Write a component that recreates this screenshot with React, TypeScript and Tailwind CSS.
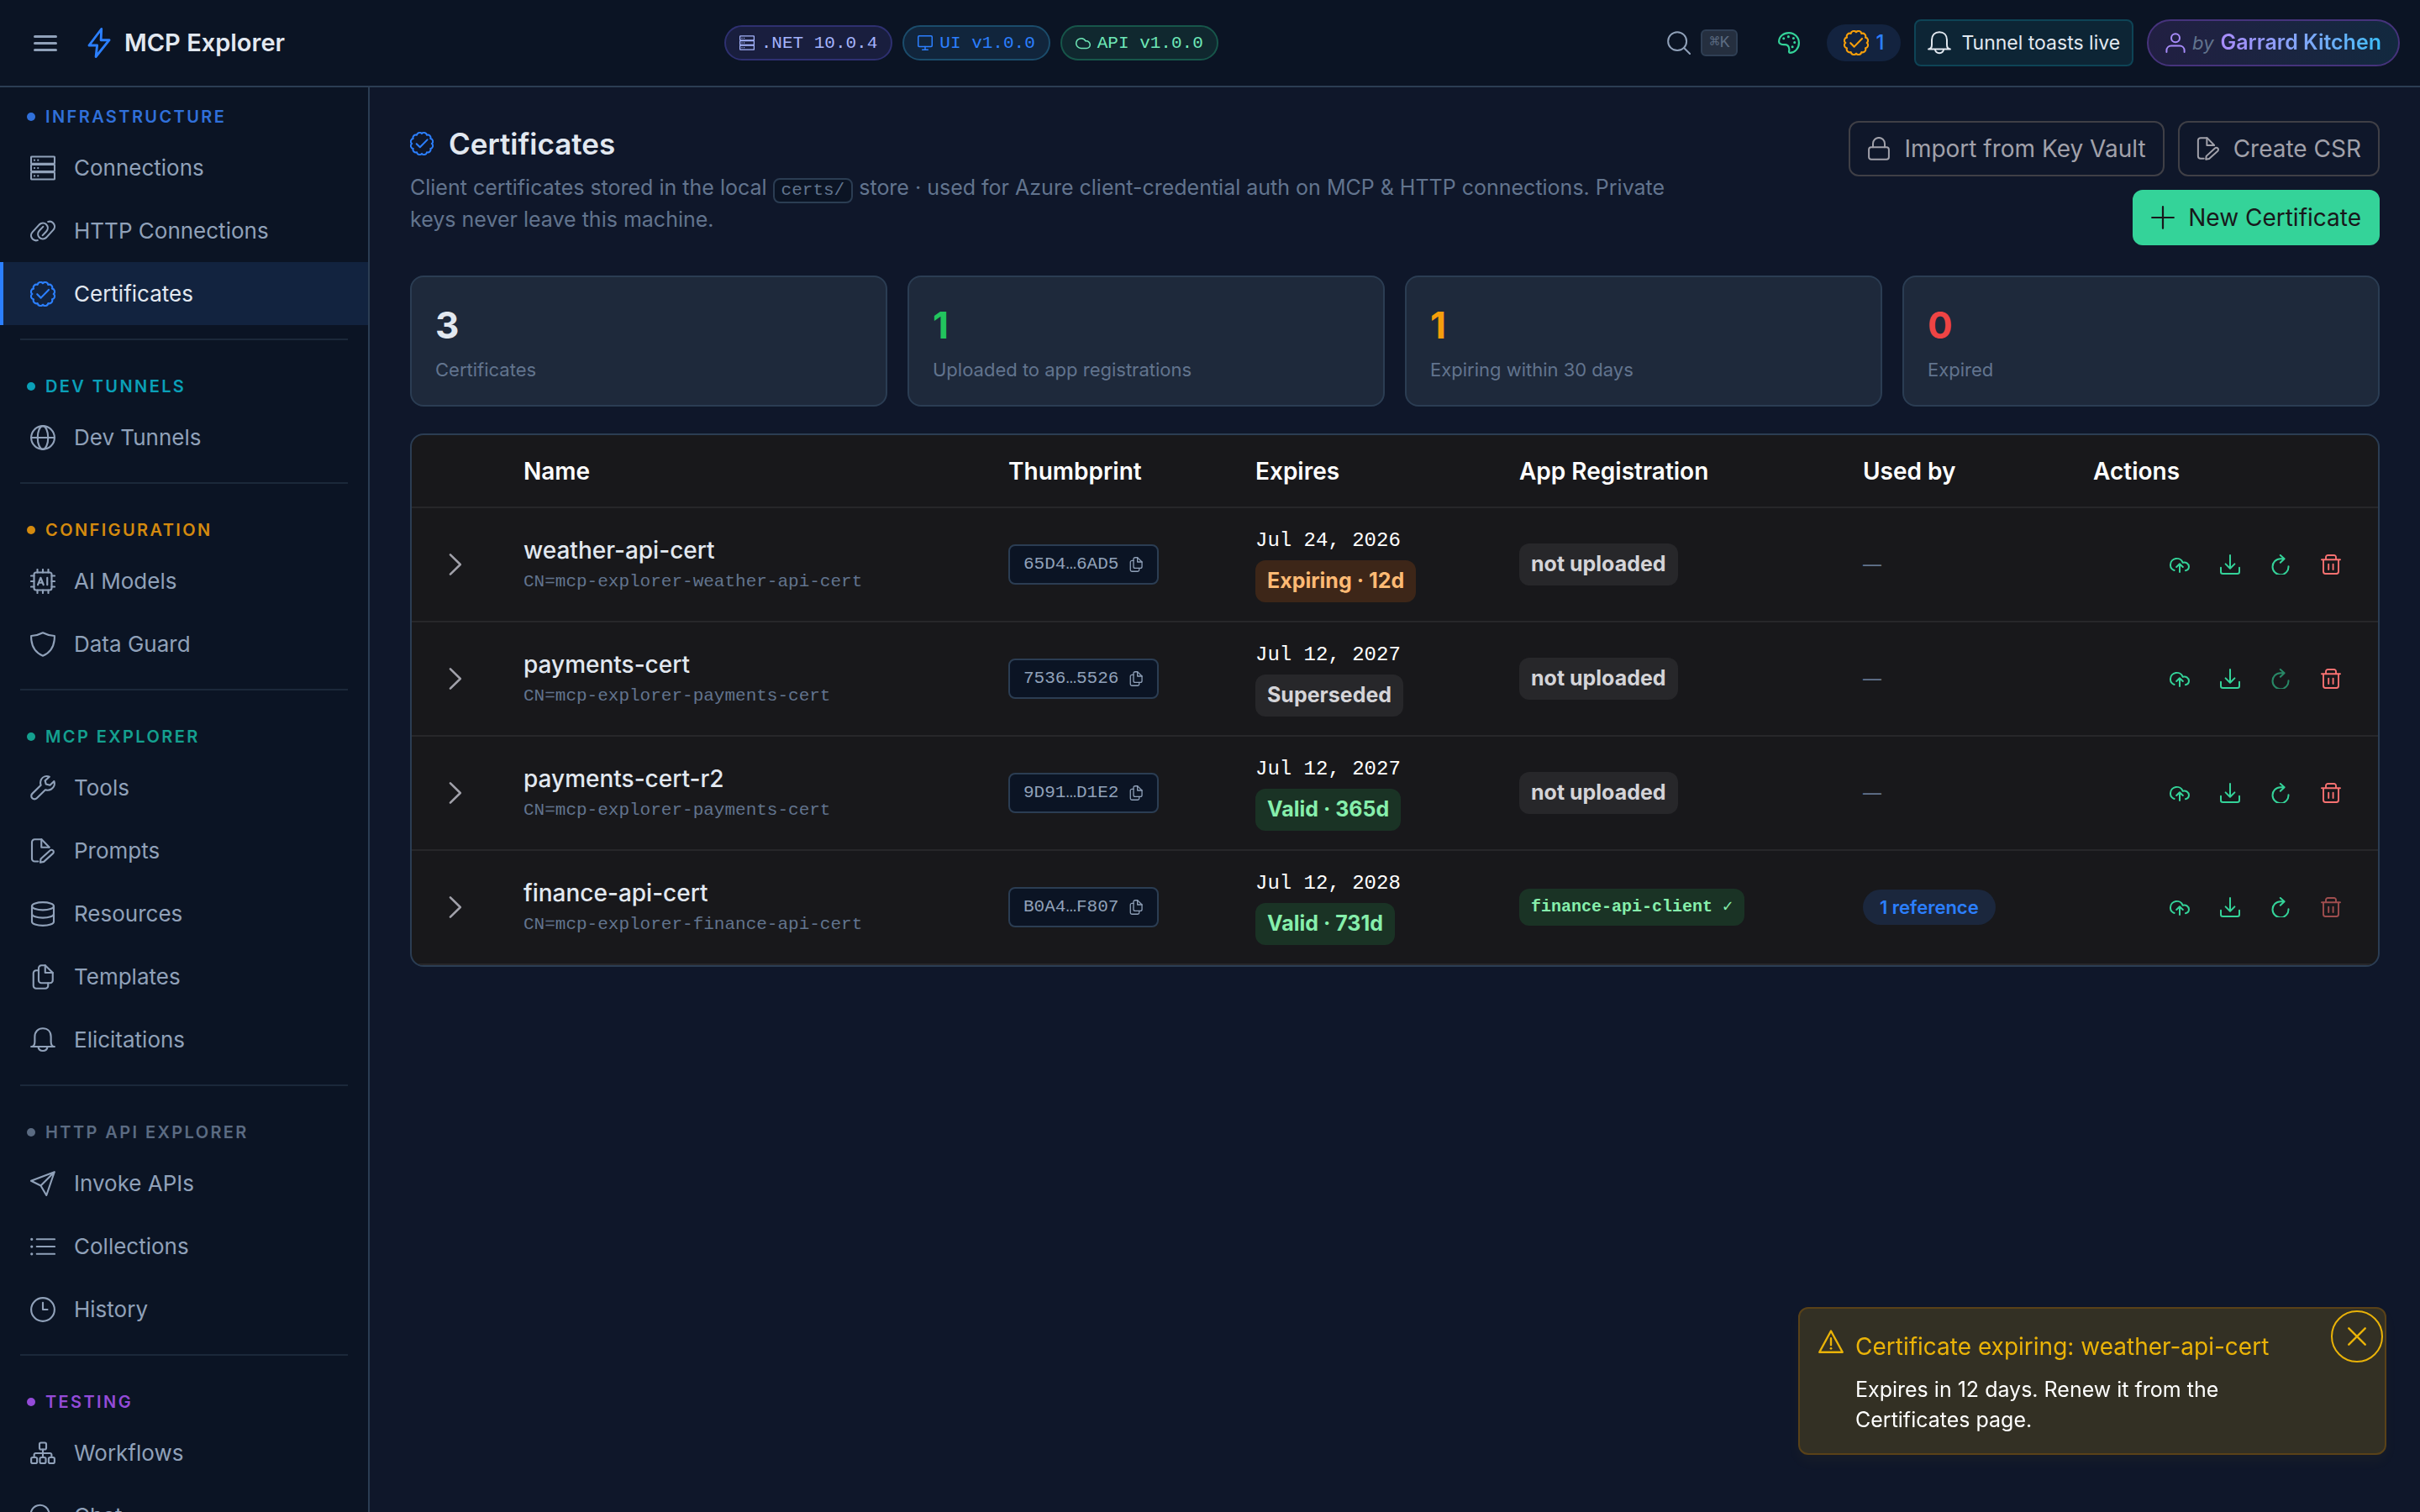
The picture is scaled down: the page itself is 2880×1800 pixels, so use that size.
import type { ReactNode } from "react"

type IconProps = { className?: string }

function Svg({ className = "size-[30px]", children }: IconProps & { children: ReactNode }) {
  return (
    <svg
      viewBox="0 0 24 24"
      fill="none"
      stroke="currentColor"
      strokeWidth="1.7"
      strokeLinecap="round"
      strokeLinejoin="round"
      aria-hidden="true"
      className={`shrink-0 ${className}`}
    >
      {children}
    </svg>
  )
}

// ring of twelve small arcs, used for the certificate seal
const SEAL_PATH =
  Array.from({ length: 12 }, (_, i) => {
    const a = (i * Math.PI) / 6
    const x = (12 + 10.2 * Math.sin(a)).toFixed(2)
    const y = (12 - 10.2 * Math.cos(a)).toFixed(2)
    return i === 0 ? `M${x} ${y}` : `A2.9 2.9 0 0 1 ${x} ${y}`
  }).join("") + "A2.9 2.9 0 0 1 12 1.8Z"

const BoltIcon = (p: IconProps) => (
  <Svg {...p}><path d="M13.8 1 4 14h6.4l-1 9L20 9.8h-6.6z" strokeWidth="1.9" /></Svg>
)
const ServerIcon = (p: IconProps) => (
  <Svg {...p}>
    <rect x=".8" y="1.2" width="22.4" height="6.6" rx=".8" />
    <rect x=".8" y="8.7" width="22.4" height="6.6" rx=".8" />
    <rect x=".8" y="16.2" width="22.4" height="6.6" rx=".8" />
    <path d="M4 4.5h.01M7.4 4.5h.01M4 12h.01M7.4 12h.01M4 19.5h.01M7.4 19.5h.01" strokeWidth="1.8" />
  </Svg>
)
const LinkIcon = (p: IconProps) => (
  <Svg {...p}>
    <path d="M7 20.8a4.8 4.8 0 0 1-4.800-1.200c-1.900-2-1.800-4.800 0-6.700l6.400-7c1.900-1.900 4.900-2 6.700-.1 1.800 1.900 1.800 4.700 0 6.600l-3.500 3.700" />
    <path d="M17 3.200a4.800 4.800 0 0 1 4.800 1.200c1.900 2 1.800 4.800 0 6.700l-6.400 7c-1.900 1.900-4.900 2-6.700.1-1.800-1.900-1.800-4.700 0-6.600l3.500-3.700" />
  </Svg>
)
const VerifiedIcon = (p: IconProps) => (
  <Svg {...p}>
    <path d={SEAL_PATH} />
    <path d="m6.6 12.2 3.500 3.500L17.600 8" />
  </Svg>
)
const GlobeIcon = (p: IconProps) => (
  <Svg {...p}>
    <circle cx="12" cy="12" r="11.1" />
    <ellipse cx="12" cy="12" rx="5" ry="11.1" />
    <path d="M.9 12h22.200" />
  </Svg>
)
const ChipIcon = (p: IconProps) => (
  <Svg {...p}>
    <rect x="3.6" y="3.6" width="16.8" height="16.8" rx="2" />
    <path d="M6.8.8v2.800M12 .8v2.800M17.200.8v2.800M6.800 20.400v2.800M12 20.400v2.800M17.200 20.400v2.800M.8 6.800h2.800M.8 12h2.800M.8 17.200h2.800M20.400 6.800h2.800M20.400 12h2.800M20.400 17.200h2.800" />
    <path d="M7.200 15.400 9.900 8.600l2.700 6.800M8.100 13.400h3.600M16.200 8.600v6.800" />
  </Svg>
)
const ShieldIcon = (p: IconProps) => (
  <Svg {...p}><path d="M12 1c3.600 1.900 7.200 2.900 11.100 3C23.300 13 19.600 19.800 12 23 4.400 19.800.7 13 .9 4 4.800 3.900 8.400 2.900 12 1z" /></Svg>
)
const WrenchIcon = (p: IconProps) => (
  <Svg {...p}>
    <path d="M18.200 1.400c-3-1.200-6.200-.2-7.700 2.400-1 1.800-1 3.800-.4 5.600L1.900 17.500a3 3 0 0 0 0 4.300 3 3 0 0 0 4.300 0l8.200-8c1.900.6 4 .4 5.600-.6 2.600-1.600 3.700-4.700 2.700-7.600l-3.900 3.800-3.800-1-.9-3.300z" />
  </Svg>
)
const FileEditIcon = (p: IconProps) => (
  <Svg {...p}>
    <path d="M7.500 22H4.200a2.600 2.600 0 0 1-2.600-2.600V3.600A2.600 2.600 0 0 1 4.200 1h6.600L18 8.400" />
    <path d="M10.600 1v7.600H18" />
    <path d="m10 19.600 8.800-8a2 2 0 0 1 2.900 0 1.900 1.900 0 0 1 0 2.700l-8.800 8L9.600 23z" />
  </Svg>
)
const DatabaseIcon = (p: IconProps) => (
  <Svg {...p}>
    <ellipse cx="12" cy="4.6" rx="10.4" ry="3.7" />
    <path d="M1.600 4.600v14.800c0 2 4.600 3.700 10.400 3.700s10.400-1.700 10.400-3.700V4.600M1.600 12c0 2 4.600 3.700 10.400 3.700S22.400 14 22.400 12" />
  </Svg>
)
const CloneIcon = (p: IconProps) => (
  <Svg {...p}>
    <path d="M14.200 1h-3.600a2.600 2.600 0 0 0-2.600 2.600v11.600a2.600 2.600 0 0 0 2.600 2.600h8.200a2.600 2.600 0 0 0 2.600-2.600V8z" />
    <path d="M14.200 1v7h7.200M8 5.800H5.600A2.600 2.600 0 0 0 3 8.400v12A2.600 2.600 0 0 0 5.600 23h8.800a2.600 2.600 0 0 0 2.600-2.600v-2.600" />
  </Svg>
)
const BellIcon = (p: IconProps) => (
  <Svg {...p}>
    <path d="M.9 18.400c2.200 0 3.400-1.600 3.400-4.600V9C4.300 4 7.400 1 12 1s7.700 3 7.700 8v4.800c0 3 1.200 4.600 3.400 4.600zM7.600 18.800c.4 2.400 2 3.600 4.400 3.600s4-1.200 4.400-3.600" />
  </Svg>
)
const SendIcon = (p: IconProps) => (
  <Svg {...p}><path d="M23 1 .8 9.400l9.200 4.600L15.400 23.200zM23 1 10 14" /></Svg>
)
const ListIcon = (p: IconProps) => (
  <Svg {...p}><path d="M6.200 5h17M6.200 12h17M6.200 19h17" /><path d="M1.400 5h.01M1.400 12h.01M1.400 19h.01" strokeWidth="2.6" /></Svg>
)
const ClockIcon = (p: IconProps) => (
  <Svg {...p}><circle cx="12" cy="12" r="11.1" /><path d="M12 5.400V12h4.400" /></Svg>
)
const SitemapIcon = (p: IconProps) => (
  <Svg {...p}>
    <rect x="8.8" y="2" width="6.4" height="6.4" rx="1.4" />
    <rect x=".9" y="16" width="5.6" height="5.6" rx="1.4" />
    <rect x="9.2" y="16" width="5.6" height="5.6" rx="1.4" />
    <rect x="17.5" y="16" width="5.6" height="5.6" rx="1.4" />
    <path d="M12 8.400V16M3.700 16v-2.600a1.400 1.400 0 0 1 1.400-1.400h13.800a1.400 1.400 0 0 1 1.400 1.400V16" />
  </Svg>
)
const CommentsIcon = (p: IconProps) => (
  <Svg {...p}>
    <path d="M2 15.200A8.800 8.800 0 1 1 6 18.400L1 19.600z" />
    <path d="M19.400 9c3.200 1.600 4.400 5.400 2.800 8.600l.8 4.800-4.600-1A7.400 7.400 0 0 1 10 20.600" />
  </Svg>
)
const DesktopIcon = (p: IconProps) => (
  <Svg {...p}><rect x="1" y="1" width="22" height="17" rx="1.6" strokeWidth="2" /><path d="M12 18v5M7.600 23h8.800" strokeWidth="2" /></Svg>
)
const CloudIcon = (p: IconProps) => (
  <Svg {...p}><path d="M8.600 20.600A7.700 7.700 0 0 1 1 12.400a8 8 0 0 1 15-3.200A5.800 5.800 0 0 1 23 15c0 3.200-2.400 5.600-5.600 5.600z" strokeWidth="2" /></Svg>
)
const SearchIcon = (p: IconProps) => (
  <Svg {...p}><circle cx="10.4" cy="10.4" r="9.4" /><path d="m17.200 17.200 6 6" /></Svg>
)
const PaletteIcon = (p: IconProps) => (
  <Svg {...p}>
    <path d="M1 10.800C1 5 6 1 12 1s11 5 11 11-4.500 11-10 11c-.8 0-1-.5-1-1.200.8-3 .2-8-4.500-7.800-3 .2-6.500-.6-6.500-3.200z" strokeWidth="2" />
    <path d="M6.200 7.200h.01M11.400 5.200h.01M17 7h.01M18.200 11.600h.01M15.800 16.400h.01" strokeWidth="2.8" />
  </Svg>
)
const UserIcon = (p: IconProps) => (
  <Svg {...p}><circle cx="12" cy="6.2" r="5" strokeWidth="2" /><path d="M1.400 23v-1.800c0-3.400 2.400-5.600 5.600-5.600h10c3.200 0 5.600 2.200 5.600 5.600V23" strokeWidth="2" /></Svg>
)
const LockIcon = (p: IconProps) => (
  <Svg {...p}><rect x="1.8" y="10.4" width="20.4" height="12.6" rx="2.4" /><path d="M6 10.400V6.800a6 6 0 0 1 12 0v3.600" /></Svg>
)
const PlusIcon = (p: IconProps) => (
  <Svg {...p}><path d="M12 1v22M1 12h22" strokeWidth="1.9" /></Svg>
)
const ChevronIcon = (p: IconProps) => (
  <Svg {...p}><path d="m6.800 2 10.200 10L6.800 22" strokeWidth="2.2" /></Svg>
)
const CloudUploadIcon = (p: IconProps) => (
  <Svg {...p}>
    <path d="M5.600 19A6.800 6.800 0 0 1 1 12.200a7.600 7.600 0 0 1 14.700-2.400A5.400 5.400 0 0 1 23 14.600 5 5 0 0 1 19 19.200M12 21v-9.600M8.200 15 12 11.200l3.800 3.800" strokeWidth="2" />
  </Svg>
)
const DownloadIcon = (p: IconProps) => (
  <Svg {...p}><path d="M12 1v15.500M6.600 11.400l5.400 5.400 5.400-5.400M1 15.800v5c0 1.400 1 2.200 2.400 2.200h17.200c1.400 0 2.400-.8 2.400-2.200v-5" strokeWidth="2" /></Svg>
)
const RefreshIcon = (p: IconProps) => (
  <Svg {...p}><path d="M21.500 14.200A9.500 9.500 0 1 1 12 5.200h4.400M11.800 1l4.800 4.200-4.800 4.600" strokeWidth="2" /></Svg>
)
const TrashIcon = (p: IconProps) => (
  <Svg {...p}>
    <path d="M1 6.300h22M3 6.300v14.300A2.400 2.400 0 0 0 5.400 23h13.200a2.400 2.400 0 0 0 2.400-2.400V6.300M6 6.300V3.400A2.400 2.400 0 0 1 8.400 1h7.200A2.400 2.400 0 0 1 18 3.400v2.900M9.200 11.600v6.400M14.600 11.600v6.400" strokeWidth="1.9" />
  </Svg>
)
const WarningIcon = (p: IconProps) => (
  <Svg {...p}><path d="M12 2 23 22.200H1zM12 9v6.400" strokeWidth="1.9" /><path d="M12 18.600h.01" strokeWidth="2.2" /></Svg>
)
const CloseIcon = (p: IconProps) => (
  <Svg {...p}><path d="m1.400 1.400 21.200 21.200M22.600 1.400 1.400 22.600" strokeWidth="2.6" /></Svg>
)

type NavItem = { label: string; icon: (p: IconProps) => ReactNode; active?: boolean }
type NavSection = { title: string; color: string; items: NavItem[] }

const NAV: NavSection[] = [
  {
    title: "Infrastructure",
    color: "text-[#3070da]",
    items: [
      { label: "Connections", icon: ServerIcon },
      { label: "HTTP Connections", icon: LinkIcon },
      { label: "Certificates", icon: VerifiedIcon, active: true },
    ],
  },
  { title: "Dev Tunnels", color: "text-[#0aa0b8]", items: [{ label: "Dev Tunnels", icon: GlobeIcon }] },
  {
    title: "Configuration",
    color: "text-[#d48a0e]",
    items: [
      { label: "AI Models", icon: ChipIcon },
      { label: "Data Guard", icon: ShieldIcon },
    ],
  },
  {
    title: "MCP Explorer",
    color: "text-[#14a08f]",
    items: [
      { label: "Tools", icon: WrenchIcon },
      { label: "Prompts", icon: FileEditIcon },
      { label: "Resources", icon: DatabaseIcon },
      { label: "Templates", icon: CloneIcon },
      { label: "Elicitations", icon: BellIcon },
    ],
  },
  {
    title: "HTTP API Explorer",
    color: "text-[#5b6b82]",
    items: [
      { label: "Invoke APIs", icon: SendIcon },
      { label: "Collections", icon: ListIcon },
      { label: "History", icon: ClockIcon },
    ],
  },
  {
    title: "Testing",
    color: "text-[#944bd8]",
    items: [
      { label: "Workflows", icon: SitemapIcon },
      { label: "Chat", icon: CommentsIcon },
    ],
  },
]

const STATS = [
  { value: 3, label: "Certificates", color: "text-slate-200" },
  { value: 1, label: "Uploaded to app registrations", color: "text-[#22c55e]" },
  { value: 1, label: "Expiring within 30 days", color: "text-[#f59e0b]" },
  { value: 0, label: "Expired", color: "text-[#ef4444]" },
]

const TONES = {
  warn: "bg-[#3d2618] text-[#fdba74]",
  muted: "bg-[#27272a] text-[#d4d4d8]",
  ok: "bg-[#1a3325] text-[#86efac]",
}

type Cert = {
  name: string
  cn: string
  thumb: string
  expires: string
  status: string
  tone: keyof typeof TONES
  app?: string
  refs?: string
  renewDisabled?: boolean
  deleteDisabled?: boolean
}

const CERTS: Cert[] = [
  { name: "weather-api-cert", cn: "CN=mcp-explorer-weather-api-cert", thumb: "65D4…6AD5", expires: "Jul 24, 2026", status: "Expiring · 12d", tone: "warn" },
  { name: "payments-cert", cn: "CN=mcp-explorer-payments-cert", thumb: "7536…5526", expires: "Jul 12, 2027", status: "Superseded", tone: "muted", renewDisabled: true },
  { name: "payments-cert-r2", cn: "CN=mcp-explorer-payments-cert", thumb: "9D91…D1E2", expires: "Jul 12, 2027", status: "Valid · 365d", tone: "ok" },
  { name: "finance-api-cert", cn: "CN=mcp-explorer-finance-api-cert", thumb: "B0A4…F807", expires: "Jul 12, 2028", status: "Valid · 731d", tone: "ok", app: "finance-api-client ✓", refs: "1 reference", deleteDisabled: true },
]

const MONO = "font-['Liberation_Mono',monospace]"

function TopBar() {
  const pill = `flex h-[42px] items-center gap-2 rounded-full border-2 px-4 text-[21px] ${MONO}`
  return (
    <header className="flex h-[104px] shrink-0 items-center justify-between border-b-2 border-[#2b3d53] bg-[#0b1424] pl-10 pr-6">
      <div className="flex items-center">
        <button type="button" aria-label="Toggle menu" className="flex w-7 flex-col gap-[5px]">
          <span className="h-[3px] rounded bg-slate-400" />
          <span className="h-[3px] rounded bg-slate-400" />
          <span className="h-[3px] rounded bg-slate-400" />
        </button>
        <BoltIcon className="ml-8 size-9 text-blue-500" />
        <span className="ml-3 text-[29px] font-semibold text-slate-200">MCP Explorer</span>
      </div>

      <div className="flex items-center gap-3">
        <span className={`${pill} border-[#2e3070] bg-[#191e3e] text-[#a5b4fc]`}><ServerIcon className="size-[18px]" /><span className="pt-0.5">.NET 10.0.4</span></span>
        <span className={`${pill} border-[#1b4c6b] bg-[#11253c] text-blue-500`}><DesktopIcon className="size-[18px]" /><span className="pt-0.5">UI v1.0.0</span></span>
        <span className={`${pill} border-[#17564a] bg-[#10282f] text-[#6ee7b7]`}><CloudIcon className="size-[18px]" /><span className="pt-0.5">API v1.0.0</span></span>
      </div>

      <div className="flex items-center">
        <button type="button" aria-label="Search" className="flex items-center gap-3 pl-3 text-slate-400">
          <SearchIcon className="size-7" />
          <kbd className={`flex h-8 items-center rounded-md border-2 border-[#2f3f54] bg-[#252f3f] px-2 text-[20px] text-[#5b6a80] ${MONO}`}>⌘K</kbd>
        </button>
        <button type="button" aria-label="Theme" className="ml-12 text-[#34d399]"><PaletteIcon className="size-[26px]" /></button>
        <button type="button" aria-label="1 certificate expiring" className="ml-8 flex h-11 items-center gap-2 rounded-full bg-[#13233f] px-5 text-[24px] font-medium text-blue-500">
          <VerifiedIcon className="size-[30px] text-[#f59e0b]" />1
        </button>
        <button type="button" className="ml-4 flex h-14 items-center gap-3 rounded-lg border-2 border-[#0e4456] bg-[#0d2535] px-3.5 text-[23px] text-slate-200">
          <BellIcon className="size-7" />Tunnel toasts live
        </button>
        <a href="#author" className="ml-4 flex h-14 items-center gap-2 rounded-full border-2 border-[#46337c] bg-linear-to-r from-[#211f42] to-[#12293f] px-5 text-[25px]">
          <UserIcon className="size-6 text-[#a78bfa]" />
          <em className="text-[22px] text-slate-500">by</em>
          <span className="bg-linear-to-r from-[#a78bfa] to-[#38bdf8] bg-clip-text font-semibold text-transparent">Garrard Kitchen</span>
        </a>
      </div>
    </header>
  )
}

function SideNav() {
  return (
    <nav className="w-[440px] shrink-0 overflow-hidden border-r-2 border-[#2b3d53] bg-[#0b1424]">
      {NAV.map((section, i) => (
        <section key={section.title}>
          {i > 0 && <hr className="mx-6 my-4 border-t-2 border-[#1b283a]" />}
          <h2 className={`flex items-center gap-3 pl-8 text-[20px] font-semibold uppercase tracking-[0.12em] ${section.color} ${i > 0 ? "h-[62px] pt-4" : "h-[58px] pt-3"}`}>
            <span className="size-2.5 rounded-full bg-current" />
            {section.title}
          </h2>
          {section.items.map(({ label, icon: Icon, active }) => (
            <a
              key={label}
              href="#nav"
              className={`flex h-[75px] items-center gap-[22px] border-l-4 pl-8 text-[26px] ${active ? "border-blue-500 bg-[#12233f] text-slate-200" : "border-transparent text-slate-400"}`}
            >
              <Icon className={active ? "size-[30px] text-blue-500" : "size-[30px]"} />
              {label}
            </a>
          ))}
        </section>
      ))}
    </nav>
  )
}

function PageHeader() {
  const btn = "flex h-[66px] items-center gap-4 rounded-xl border-2 px-5 text-[28px]"
  return (
    <div className="flex items-start justify-between">
      <div className="max-w-[1500px]">
        <h1 className="flex h-[54px] items-center gap-[18px] text-[35px] font-semibold text-slate-200">
          <VerifiedIcon className="size-7 text-blue-500" />
          Certificates
        </h1>
        <p className="mt-1.5 text-[25px] leading-[38px] text-slate-500">
          Client certificates stored in the local{" "}
          <code className={`inline-block rounded-lg border-2 border-[#2b3d53] bg-[#0b1424] px-2 text-[21px] leading-[26px] text-slate-500 ${MONO}`}>certs/</code>{" "}
          store · used for Azure client-credential auth on MCP &amp; HTTP connections. Private keys never leave this machine.
        </p>
      </div>
      <div className="flex w-[660px] shrink-0 flex-wrap justify-end gap-4">
        <button type="button" className={`${btn} border-[#3f3f46] text-[#a1a1aa]`}><LockIcon className="size-7" />Import from Key Vault</button>
        <button type="button" className={`${btn} border-[#3f3f46] text-[#a1a1aa]`}><FileEditIcon className="size-7" />Create CSR</button>
        <button type="button" className={`${btn} border-[#34d399] bg-[#34d399] text-[#18181b]`}><PlusIcon className="size-7" />New Certificate</button>
      </div>
    </div>
  )
}

function CertRow({ cert }: { cert: Cert }) {
  const tag = "inline-flex h-[50px] items-center rounded-xl px-3.5 text-[25px] font-bold"
  const act = "flex h-14 w-[60px] items-center justify-center disabled:opacity-60"
  return (
    <tr className="h-[136px] border-b-2 border-[#27272a]">
      <td className="pl-8">
        <button type="button" aria-label={`Expand ${cert.name}`} className="flex size-10 items-center justify-center text-[#a1a1aa]">
          <ChevronIcon className="size-7" />
        </button>
      </td>
      <td className="px-6 pt-1">
        <div className="text-[28px] font-medium leading-[38px] text-slate-200">{cert.name}</div>
        <div className={`text-[21px] leading-[38px] text-slate-500 ${MONO}`}>{cert.cn}</div>
      </td>
      <td className="px-6">
        <button type="button" aria-label={`Copy thumbprint ${cert.thumb}`} className={`flex h-12 items-center gap-3 rounded-lg border-2 border-[#2b3d53] bg-[#0b1424] px-4 text-[21px] text-slate-400 ${MONO}`}>
          {cert.thumb}
          <CloneIcon className="size-[18px]" />
        </button>
      </td>
      <td className="px-6">
        <div className={`mb-1.5 text-[24px] leading-[34px] text-white ${MONO}`}>{cert.expires}</div>
        <span className={`${tag} ${TONES[cert.tone]}`}>{cert.status}</span>
      </td>
      <td className="px-6">
        {cert.app ? (
          <span className={`inline-flex h-11 items-center rounded-xl px-3.5 text-[20px] font-bold ${MONO} ${TONES.ok}`}>{cert.app}</span>
        ) : (
          <span className={`${tag} ${TONES.muted}`}>not uploaded</span>
        )}
      </td>
      <td className="px-6">
        {cert.refs ? (
          <a href="#references" className="inline-flex h-[42px] items-center rounded-full bg-[#1b273d] px-5 text-[22px] font-semibold text-blue-500">{cert.refs}</a>
        ) : (
          <span className="text-[22px] text-slate-500">—</span>
        )}
      </td>
      <td className="pr-[26px]">
        <div className="flex justify-end text-[#34d399]">
          <button type="button" aria-label="Upload" className={act}><CloudUploadIcon className="size-6" /></button>
          <button type="button" aria-label="Download" className={act}><DownloadIcon className="size-6" /></button>
          <button type="button" aria-label="Renew" disabled={cert.renewDisabled} className={act}><RefreshIcon className="size-6" /></button>
          <button type="button" aria-label="Delete" disabled={cert.deleteDisabled} className={`${act} text-[#f87171]`}><TrashIcon className="size-6" /></button>
        </div>
      </td>
    </tr>
  )
}

function CertTable() {
  return (
    <div className="mt-8 overflow-hidden rounded-2xl border-2 border-[#2b3d53] bg-[#18181b]">
      <table className="w-full table-fixed border-collapse text-left">
        <thead>
          <tr className="h-[86px] border-b-2 border-[#27272a] text-[28px] text-white">
            <th className="w-[109px]" aria-label="Expand" />
            <th className="px-6 font-semibold">Name</th>
            <th className="w-[294px] px-6 font-semibold">Thumbprint</th>
            <th className="w-[314px] px-6 font-semibold">Expires</th>
            <th className="w-[409px] px-6 font-semibold">App Registration</th>
            <th className="w-[274px] px-6 font-semibold">Used by</th>
            <th className="w-[363px] px-6 font-semibold">Actions</th>
          </tr>
        </thead>
        <tbody>
          {CERTS.map(cert => <CertRow key={cert.name} cert={cert} />)}
        </tbody>
      </table>
    </div>
  )
}

function Toast() {
  return (
    <div role="alert" className="fixed bottom-[68px] right-10 flex w-[700px] gap-3.5 rounded-xl border-2 border-[#5a4218] bg-[#333024] pb-[22px] pl-[22px] pt-6 shadow-[0_8px_16px_rgba(234,179,8,0.04)]">
      <WarningIcon className="size-[30px] text-[#eab308]" />
      <div>
        <div className="text-[28px] leading-[42px] text-[#eab308]">Certificate expiring: weather-api-cert</div>
        <p className="mt-3 w-[500px] text-[25px] leading-9 text-white">Expires in 12 days. Renew it from the Certificates page.</p>
      </div>
      <button type="button" aria-label="Close" className="absolute right-0.5 top-0.5 flex size-[62px] items-center justify-center rounded-full border-2 border-[#eab308] text-[#eab308]">
        <CloseIcon className="size-[22px]" />
      </button>
    </div>
  )
}

export default function App() {
  return (
    <div className="flex h-screen flex-col bg-[#0f172a] font-['Inter',sans-serif]">
      <TopBar />
      <div className="flex min-h-0 flex-1">
        <SideNav />
        <main className="min-w-0 flex-1 overflow-hidden px-12 pt-10">
          <PageHeader />
          <div className="mt-9 grid grid-cols-4 gap-6">
            {STATS.map(stat => (
              <div key={stat.label} className="h-[156px] rounded-2xl border-2 border-[#2b3d53] bg-[#1e293b] px-7 pt-7">
                <div className={`text-[44px] font-bold leading-[58px] ${stat.color}`}>{stat.value}</div>
                <div className="mt-2 text-[22px] leading-8 text-slate-500">{stat.label}</div>
              </div>
            ))}
          </div>
          <CertTable />
        </main>
      </div>
      <Toast />
    </div>
  )
}
